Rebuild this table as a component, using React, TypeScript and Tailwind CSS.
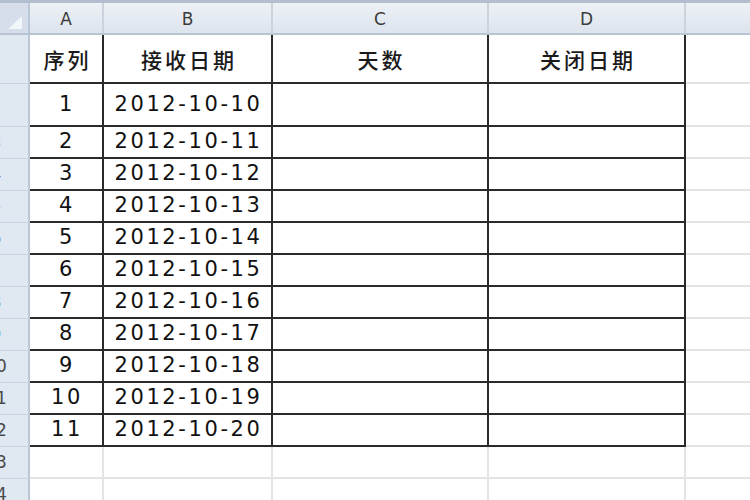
import React from "react";

/* ── Données du tableau ───────────────────────────────────────────── */
const rows = [
  { n: 2, seq: "1", date: "2012-10-10", h: "h-[43px]" },
  { n: 3, seq: "2", date: "2012-10-11", h: "h-[32px]" },
  { n: 4, seq: "3", date: "2012-10-12", h: "h-[32px]" },
  { n: 5, seq: "4", date: "2012-10-13", h: "h-[32px]" },
  { n: 6, seq: "5", date: "2012-10-14", h: "h-[32px]" },
  { n: 7, seq: "6", date: "2012-10-15", h: "h-[32px]" },
  { n: 8, seq: "7", date: "2012-10-16", h: "h-[32px]" },
  { n: 9, seq: "8", date: "2012-10-17", h: "h-[32px]" },
  { n: 10, seq: "9", date: "2012-10-18", h: "h-[32px]" },
  { n: 11, seq: "10", date: "2012-10-19", h: "h-[32px]" },
  { n: 12, seq: "11", date: "2012-10-20", h: "h-[32px]" },
];

const font = "font-['DejaVu_Sans','Noto_Sans_CJK_SC',sans-serif]";
const cell = "shrink-0 border-r-2 border-b-2 border-[#2a2a2a] flex items-center justify-center";
const grid = "shrink-0 border-r-2 border-b-2 border-[#e4e4e4]";

function RowHead({ n }: { n?: number }) {
  return (
    <div className="w-[30px] shrink-0 overflow-hidden bg-[#e0e8f2] border-r-2 border-r-[#bac7d7] border-b border-b-[#c9d3e0] flex items-center">
      {n !== undefined && (
        <div className="w-[40px] -ml-[24px] shrink-0 text-center text-[17px] text-[#4a4a4a]">{n}</div>
      )}
    </div>
  );
}

function ColHead({ label, w }: { label?: string; w: string }) {
  return (
    <div className={`${w} shrink-0 border-r-2 border-[#cbd3de] flex items-center justify-center pt-[4px] text-[17px] text-[#3c3c3c]`}>
      {label}
    </div>
  );
}

export default function App() {
  return (
    <div className={`w-[750px] h-[500px] overflow-hidden bg-white ${font}`}>
      {/* En-tête des colonnes */}
      <div className="flex h-[35px] border-t-[3px] border-[#b3bfce] border-b-2 border-b-[#b9c4d2] bg-gradient-to-b from-[#edf1f6] to-[#dde4ed]">
        <div className="w-[30px] shrink-0 bg-[#d5deea] border-r-2 border-[#bac7d7] flex items-end justify-end pr-[6px] pb-[4px]">
          <svg width="14" height="13" viewBox="0 0 14 13">
            <polygon points="14,0 14,13 0,13" fill="#f2f5fa" />
          </svg>
        </div>
        <ColHead label="A" w="w-[74px]" />
        <ColHead label="B" w="w-[169px]" />
        <ColHead label="C" w="w-[216px]" />
        <ColHead label="D" w="w-[197px]" />
        <div className="flex-1" />
      </div>

      {/* Ligne de titres */}
      <div className="flex h-[49px]">
        <RowHead />
        <div className={`${cell} w-[74px] pt-[6px] text-[21px] font-medium tracking-[3px] pl-[3px] text-[#1a1a1a]`}>序列</div>
        <div className={`${cell} w-[169px] pt-[6px] text-[21px] font-medium tracking-[3px] pl-[3px] text-[#1a1a1a]`}>接收日期</div>
        <div className={`${cell} w-[216px] pt-[6px] text-[21px] font-medium tracking-[3px] pl-[3px] text-[#1a1a1a]`}>天数</div>
        <div className={`${cell} w-[197px] pt-[6px] text-[21px] font-medium tracking-[3px] pl-[3px] text-[#1a1a1a]`}>关闭日期</div>
        <div className="flex-1 border-b-2 border-[#e4e4e4]" />
      </div>

      {rows.map((r) => (
        <div key={r.n} className={`flex ${r.h}`}>
          <RowHead n={r.n} />
          <div className={`${cell} w-[74px] text-[21px] tracking-[2.6px] pl-[2px] text-[#111]`}>{r.seq}</div>
          <div className={`${cell} w-[169px] text-[21px] tracking-[2.6px] pl-[2px] text-[#111]`}>{r.date}</div>
          <div className={`${cell} w-[216px]`} />
          <div className={`${cell} w-[197px]`} />
          <div className="flex-1 border-b-2 border-[#e4e4e4]" />
        </div>
      ))}

      {[13, 14].map((n) => (
        <div key={n} className="flex h-[32px]">
          <RowHead n={n} />
          <div className={`${grid} w-[74px]`} />
          <div className={`${grid} w-[169px]`} />
          <div className={`${grid} w-[216px]`} />
          <div className={`${grid} w-[197px]`} />
          <div className="flex-1 border-b-2 border-[#e4e4e4]" />
        </div>
      ))}
    </div>
  );
}
